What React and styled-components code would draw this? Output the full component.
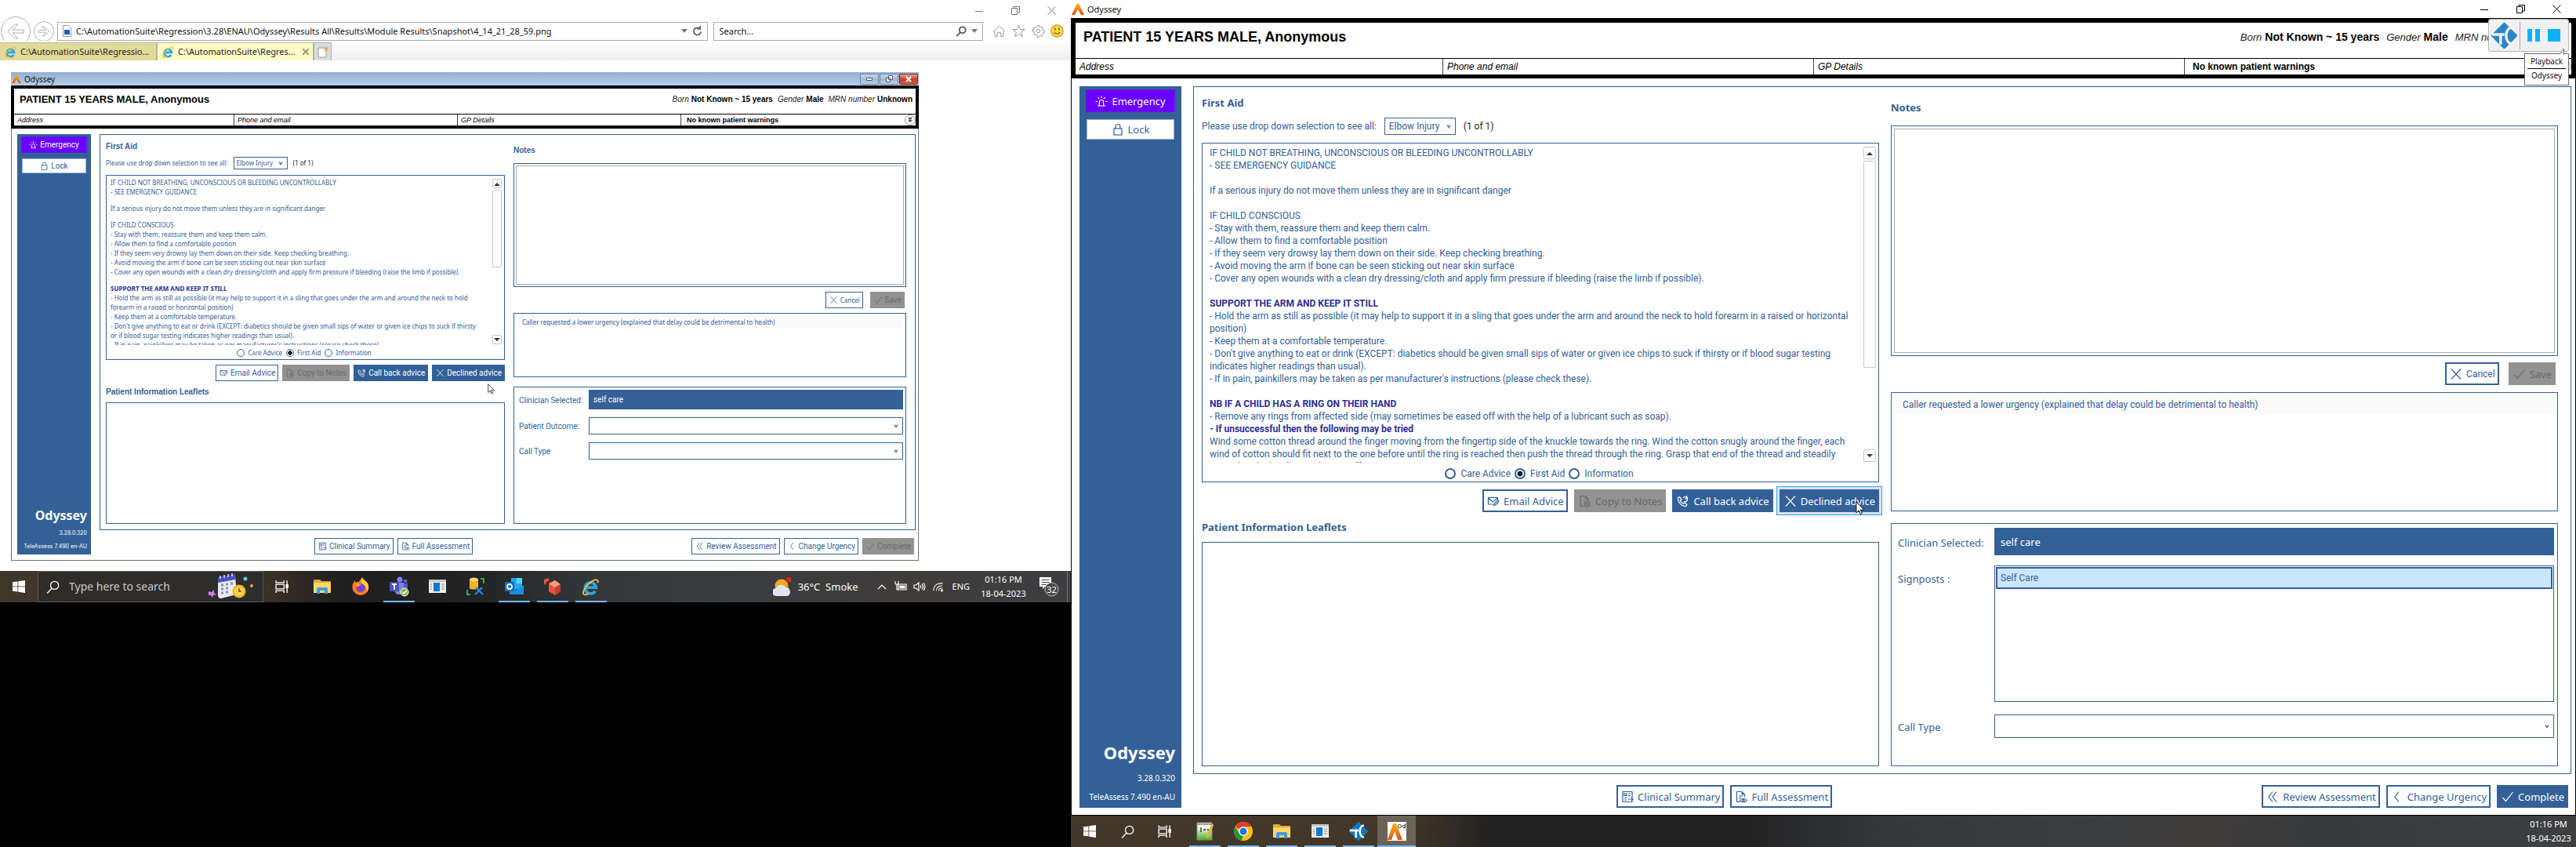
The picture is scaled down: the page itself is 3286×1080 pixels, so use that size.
import React, { useId } from "react";
import styled, { createGlobalStyle, css, ThemeProvider } from "styled-components";

const blue = "#336197";
const sans = `"Noto Sans", "Open Sans", sans-serif`;
const arial = `"Liberation Sans", Arial, sans-serif`;
const roboto = `Roboto, "Noto Sans", sans-serif`;

/* Two densities of the same application window. */
const large = {
  border: "#000", titleBar: 23, titleBg: "#fff", titleFont: 11, logo: 16,
  frame: "6px 6px 5px 6px", nameRow: 45, nameLift: 9, nameFont: 18, namePad: 10, detailRow: 20, detailFont: 12,
  detailCols: "468fr 473fr 473fr 494fr", detailPad: 5, warnPad: 10,
  born: 14, bornLabel: 13, bornGap: 9, bornInner: 4, bornRight: 4,
  bodyPad: "10px 5px 9px 10px", bodyGap: 15,
  side: 130, sidePad: "4px 8px 2px", sideGap: 9, sideFont: 13, emergencyH: 29, lockH: 26, brand: 22, brandLine: 42, version: 10, versionFont: sans, versionLine: 24,
  panelPad: "11px 16px 9px 10px", cols: "864fr 851fr", colGap: 15,
  head: `bold 13px/18px ${sans}`, headH: 18,
  body: `12px/16px ${roboto}`, lineH: 16, paraGap: 16, paraPad: 9, textTop: 1, textRight: 4,
  ctl: `13px/18px ${sans}`, compact: `12px/18px ${roboto}`,
  pickGap: 10, pickH: 22, adviceGap: 10, adviceH: 433, textH: 404,
  scrollW: 16, scrollH: 16, thumb: 264, radio: 14, radioGap: 6, radioSpace: 5, radioTop: 3,
  btnH: 29, btnB: 2, btnPad: 4, btnIcon: 16, btnGap: 5, btnSpace: 8, btnTop: 9,
  leafTop: 10, leafGap: 10, leafH: 286,
  noteTop: 6, noteGap: 14, noteH: 294, notePad: 3, noteBtnTop: 8, noteBtnSpace: 12,
  callTop: 9, callH: 152, callRow: 22, callPad: "5px", callText: 9,
  outTop: 15, outPad: "5px 4px 5px 8px", labelW: 123, fieldH: 35, fieldGap: 13, selectH: 30, listH: 174, itemH: 28, fieldPad: 8,
  footTop: 14, footRight: 4,
};
const small = {
  border: "#6f6f6f", titleBar: 17, titleBg: "linear-gradient(#93b0cf, #b5cfec)", titleFont: 10, logo: 12,
  frame: "4px", nameRow: 32, nameLift: 5, nameFont: 13, namePad: 7, detailRow: 14, detailFont: 9,
  detailCols: "280fr 285fr 285fr 300fr", detailPad: 4, warnPad: 7,
  born: 10, bornLabel: 10, bornGap: 6, bornInner: 3, bornRight: 4,
  bodyPad: "7px 3px 7px 7px", bodyGap: 11,
  side: 94, sidePad: "3px 5px 2px", sideGap: 7, sideFont: 10, emergencyH: 21, lockH: 19, brand: 16, brandLine: 28, version: 7, versionFont: `Inter, ${sans}`, versionLine: 17,
  panelPad: "9px 11px 7px 7px", cols: "509fr 501fr", colGap: 11,
  head: `bold 10px/12px ${arial}`, headH: 12,
  body: `8px/12px ${sans}`, lineH: 12, paraGap: 9, paraPad: 5, textTop: 0, textRight: 12,
  ctl: `10px/12px ${roboto}`, compact: `8px/12px ${sans}`,
  pickGap: 7, pickH: 16, adviceGap: 7, adviceH: 236, textH: 213,
  scrollW: 12, scrollH: 12, thumb: 99, radio: 10, radioGap: 4, radioSpace: 5, radioTop: 2,
  btnH: 21, btnB: 1, btnPad: 4, btnIcon: 11, btnGap: 3, btnSpace: 5, btnTop: 6,
  leafTop: 8, leafGap: 7, leafH: 155,
  noteTop: 5, noteGap: 10, noteH: 158, notePad: 2, noteBtnTop: 6, noteBtnSpace: 9,
  callTop: 6, callH: 82, callRow: 16, callPad: "3px", callText: 7,
  outTop: 12, outPad: "3px 3px 3px 6px", labelW: 89, fieldH: 25, fieldGap: 10, selectH: 22, listH: 22, itemH: 20, fieldPad: 6,
  footTop: 10, footRight: 2,
};
const t = (key) => (p) => p.theme[key];
const px = (key) => (p) => `${p.theme[key]}px`;

const Global = createGlobalStyle`
  *, *::before, *::after { box-sizing: border-box; }
  body { margin: 0; background: #000; font-family: ${sans}; }
  button, input, select, textarea { font: inherit; color: inherit; margin: 0; padding: 0; border-radius: 0; }
  ul { list-style: none; margin: 0; padding: 0; }
  h1, h2, p { margin: 0; font: inherit; }
  svg { display: block; flex: none; }
`;

const Screens = styled.div`
  display: flex;
  align-items: stretch;
  min-height: 100vh;
`;
const Screen = styled.section`
  flex: ${(p) => p.$share} 1 0;
  min-width: 0;
  display: flex;
  flex-direction: column;
  background: ${(p) => (p.$dark ? "#000" : "#fff")};
`;
const Desktop = styled.div`
  display: flex;
  flex-direction: column;
  background: #fff;
`;

/* ---------- window chrome ---------- */
const WindowControls = styled.div`
  display: flex;
  margin-left: auto;
  padding-right: 2px;
`;
const PlainButton = styled.button`
  display: flex;
  align-items: center;
  justify-content: center;
  width: ${(p) => p.$w || 24}px;
  height: ${(p) => p.$h || 24}px;
  border: 0;
  background: transparent;
  color: ${(p) => p.$color || "#000"};
`;
const AeroControls = styled.div`
  display: flex;
  gap: 1px;
  margin-left: auto;
  padding-right: 1px;
`;
const AeroButton = styled.button`
  display: flex;
  align-items: center;
  justify-content: center;
  width: 24px;
  height: 14px;
  border: 1px solid ${(p) => (p.$close ? "#7a2c26" : "#6d87a8")};
  border-radius: 0 0 2px 2px;
  background: ${(p) => (p.$close ? "linear-gradient(#e0a294, #c5432b 50%, #cf5f45)" : "linear-gradient(#c6d8ec, #9fbad9 50%, #b4cce6)")};
`;
const AppWindow = styled.div`
  display: flex;
  flex-direction: column;
  flex: 1;
  background: #fff;
  color: ${blue};
`;
const TitleBar = styled.div`
  display: flex;
  align-items: center;
  gap: 4px;
  height: ${px("titleBar")};
  padding-left: 1px;
  background: ${t("titleBg")};
  font: ${px("titleFont")}/16px ${sans};
  color: #111;
`;
const PatientFrame = styled.header`
  position: relative;
  border: 0 solid #000;
  border-width: ${t("frame")};
  background: #fff;
  color: #000;
  font-family: ${arial};
`;
const NameRow = styled.div`
  display: flex;
  align-items: center;
  justify-content: space-between;
  height: ${px("nameRow")};
  padding: 0 ${px("bornRight")} ${px("nameLift")} ${px("namePad")};
`;
const PatientName = styled.h1`
  font-weight: bold;
  font-size: ${px("nameFont")};
`;
const BirthFacts = styled.div`
  display: flex;
  align-items: baseline;
  gap: ${px("bornGap")};
  font-size: ${px("born")};
  white-space: nowrap;
  i { font-size: ${px("bornLabel")}; margin-right: ${px("bornInner")}; color: #222; }
`;
const DetailRow = styled.div`
  display: grid;
  grid-template-columns: ${t("detailCols")};
  height: calc(${px("detailRow")} + 1px);
  border-top: 1px solid #000;
  font-size: ${px("detailFont")};
`;
const Detail = styled.div`
  display: flex;
  align-items: center;
  justify-content: space-between;
  padding-left: ${(p) => (p.$warn ? p.theme.warnPad : p.theme.detailPad)}px;
  font-style: ${(p) => (p.$warn ? "normal" : "italic")};
  font-weight: ${(p) => (p.$warn ? "bold" : "normal")};
  & + & { border-left: 1px solid #444; }
`;
const ExpandButton = styled.button`
  display: flex;
  align-items: center;
  justify-content: center;
  width: 14px;
  height: 14px;
  border: 1px solid #999;
  border-radius: 50%;
  background: #f3f3f3;
  color: #222;
`;

/* ---------- body ---------- */
const Body = styled.div`
  flex: 1;
  display: flex;
  gap: ${px("bodyGap")};
  padding: ${t("bodyPad")};
  border: 1px solid ${t("border")};
  border-top: 0;
`;
const Sidebar = styled.nav`
  display: flex;
  flex-direction: column;
  align-items: stretch;
  width: ${px("side")};
  padding: ${t("sidePad")};
  background: ${blue};
  color: #fff;
  text-align: right;
  white-space: nowrap;
  font: ${px("version")}/${px("versionLine")} ${t("versionFont")};
`;
const SideButton = styled.button`
  display: flex;
  align-items: center;
  justify-content: center;
  gap: ${px("btnGap")};
  height: ${(p) => (p.$alert ? p.theme.emergencyH : p.theme.lockH)}px;
  margin: 0 ${(p) => (p.$alert ? 0 : 1)}px ${px("sideGap")};
  border: 1px solid ${(p) => (p.$alert ? "#6217e6" : "#9db4d0")};
  background: ${(p) => (p.$alert ? "#6a00ff" : "#fff")};
  color: ${(p) => (p.$alert ? "#fff" : blue)};
  font: ${t("ctl")};
`;
const Brand = styled.div`
  margin-top: auto;
  font: bold ${px("brand")}/${px("brandLine")} ${sans};
`;
const Main = styled.main`
  flex: 1;
  min-width: 0;
  display: flex;
  flex-direction: column;
`;
const Panel = styled.div`
  flex: 1;
  display: grid;
  grid-template-columns: ${t("cols")};
  column-gap: ${px("colGap")};
  padding: ${t("panelPad")};
  border: 1px solid ${blue};
`;
const Column = styled.div`
  display: flex;
  flex-direction: column;
  min-width: 0;
  padding-top: ${(p) => (p.$lower ? p.theme.noteTop : 0)}px;
`;
const Heading = styled.h2`
  font: ${t("head")};
  margin-top: ${(p) => (p.$spaced ? p.theme.leafTop : 0)}px;
`;
const PickRow = styled.div`
  display: flex;
  align-items: center;
  gap: ${px("adviceGap")};
  margin-top: ${px("pickGap")};
  font: ${t("body")};
  span { color: #222; }
`;
const SelectBox = styled.div`
  display: flex;
  align-items: center;
  width: ${(p) => (p.$full ? "100%" : "auto")};
  height: ${(p) => (p.$full ? p.theme.selectH : p.theme.pickH)}px;
  border: 1px solid ${blue};
  padding: 0 5px 0 ${(p) => p.theme.fieldPad - 3}px;
  background: #fff;
  color: ${blue};
  select {
    flex: 1;
    appearance: none;
    border: 0;
    background: transparent;
    padding-right: ${(p) => p.theme.fieldPad}px;
  }
`;
const AdviceBox = styled.div`
  display: flex;
  flex-direction: column;
  height: ${px("adviceH")};
  margin-top: ${px("adviceGap")};
  padding: 3px 3px 0 0;
  border: 1px solid ${blue};
  font: ${t("body")};
`;
const AdviceScroll = styled.div`
  display: flex;
  height: ${px("textH")};
  overflow: hidden;
`;
const AdviceText = styled.div`
  flex: 1;
  display: flex;
  flex-direction: column;
  gap: ${px("paraGap")};
  padding: ${px("textTop")} ${px("textRight")} 0 ${px("paraPad")};
  b { color: #2d2f96; }
`;
const ScrollTrack = styled.div`
  display: flex;
  flex-direction: column;
  gap: 2px;
  width: ${px("scrollW")};
  padding: 1px 0;
  color: #333;
`;
const ScrollArrow = styled.button`
  display: flex;
  align-items: center;
  justify-content: center;
  height: ${px("scrollH")};
  border: 1px solid #c6c6c6;
  border-radius: 2px;
  background: #fff;
  &:last-child { margin-top: auto; }
`;
const ScrollThumb = styled.div`
  height: ${px("thumb")};
  border: 1px solid #c6c6c6;
  border-radius: 2px;
`;
const RadioRow = styled.div`
  flex: 1;
  display: flex;
  align-items: center;
  justify-content: center;
  gap: ${px("radioSpace")};
  padding-top: ${px("radioTop")};
`;
const RadioLabel = styled.label`
  display: flex;
  align-items: center;
  gap: ${px("radioGap")};
  input {
    appearance: none;
    width: ${px("radio")};
    height: ${px("radio")};
    border: ${(p) => p.theme.btnB}px solid ${blue};
    border-radius: 50%;
    background: #fff;
  }
  input:checked { background: radial-gradient(circle, #1b1b1b 45%, #fff 52%); }
`;
const ButtonRow = styled.div`
  display: flex;
  justify-content: flex-end;
  gap: ${(p) => (p.$notes ? p.theme.noteBtnSpace : p.theme.btnSpace)}px;
  margin-top: ${(p) => (p.$notes ? p.theme.noteBtnTop : p.theme.btnTop)}px;
  padding-right: ${(p) => (p.$notes ? p.theme.notePad : 0)}px;
`;
const ActionButton = styled.button`
  display: flex;
  align-items: center;
  gap: ${px("btnGap")};
  height: ${px("btnH")};
  padding: 0 ${(p) => p.theme.btnPad - 1}px 0 ${px("btnPad")};
  border: ${px("btnB")} solid ${blue};
  background: #fff;
  color: ${blue};
  font: ${(p) => (p.$compact ? p.theme.compact : p.theme.ctl)};
  white-space: nowrap;
  ${(p) => p.$solid && css`background: ${blue}; color: #fff;`}
  ${(p) => p.$focused && css`outline: 1px solid #2aa6e6; box-shadow: 0 0 0 3px #dfe0f6; outline-offset: 3px;`}
  &:disabled { background: #929292; border-color: #929292; color: #6a6a6a; }
`;
const PointerHost = styled.div`position: relative;`;
const PointerSpot = styled.div`
  position: absolute;
  left: ${(p) => p.$x}px;
  top: ${(p) => p.$y}px;
`;
const LeafletBox = styled.div`
  flex: 1;
  min-height: ${px("leafH")};
  margin-top: ${px("leafGap")};
  border: 1px solid ${blue};
`;
const NotesLabel = styled.label`font: ${t("head")};`;
const NotesBox = styled.div`
  display: flex;
  height: ${px("noteH")};
  margin-top: ${px("noteGap")};
  padding: ${px("notePad")};
  border: 1px solid ${blue};
  textarea { flex: 1; border: 1px solid #ababab; resize: none; font: ${t("body")}; }
`;
const CallerBox = styled.div`
  height: ${px("callH")};
  margin-top: ${px("callTop")};
  padding: ${t("callPad")};
  border: 1px solid ${blue};
`;
const CallerRow = styled.p`
  height: ${px("callRow")};
  padding: 2px ${px("callText")};
  background: #fafafa;
  font: ${t("body")};
`;
const OutcomeBox = styled.div`
  flex: 1;
  display: grid;
  grid-template-columns: ${px("labelW")} 1fr;
  grid-auto-rows: max-content;
  row-gap: ${px("fieldGap")};
  align-items: center;
  margin-top: ${px("outTop")};
  padding: ${t("outPad")};
  border: 1px solid ${blue};
  font: ${t("ctl")};
`;
const OutcomeLabel = styled.label`
  align-self: ${(p) => (p.$top ? "start" : "center")};
  padding-top: ${(p) => (p.$top ? 8 : 2)}px;
`;
const ClinicianField = styled.input`
  width: 100%;
  height: ${px("fieldH")};
  border: 0;
  padding: 0 ${px("fieldPad")};
  background: ${blue};
  color: #fff;
`;
const SignpostList = styled.ul`
  height: ${px("listH")};
  margin-bottom: 3px;
  padding: 1px;
  border: 1px solid ${blue};
  font: ${t("body")};
  li {
    display: flex;
    align-items: center;
    height: ${px("itemH")};
    padding-left: 4px;
    border: 2px solid ${blue};
    background: #cce5ff;
  }
`;
const Footer = styled.footer`
  display: flex;
  gap: ${px("btnSpace")};
  margin-top: ${px("footTop")};
  padding-right: ${px("footRight")};
`;
const FooterCenter = styled.div`
  flex: 1;
  display: flex;
  justify-content: center;
  gap: ${px("btnSpace")};
`;

/* ---------- playback widget ---------- */
const PlaybackBar = styled.div`
  position: absolute;
  right: 3px;
  top: -5px;
  display: flex;
  align-items: center;
  width: 103px;
  height: 42px;
  border: 1px solid #b4b4b4;
  border-radius: 3px;
  background: #f0f0f0;
  padding: 0 3px;
  z-index: 1;
`;
const PlaybackDivider = styled.span`
  width: 1px;
  height: 35px;
  margin: 0 4px 0 3px;
  background: #a8a8a8;
`;
const PlaybackTip = styled.div`
  position: absolute;
  right: 3px;
  top: 39px;
  width: 57px;
  padding: 1px 3px 3px;
  border: 1px solid #6b6b6b;
  background: #fff;
  color: #111;
  text-align: center;
  font: 10px/17px ${sans};
  z-index: 1;
  div + div { border-top: 1px solid #000; }
`;
const TipTail = styled.svg`
  position: absolute;
  right: 4px;
  top: -8px;
`;

/* ---------- browser ---------- */
const BrowserTitle = styled.div`
  display: flex;
  height: 27px;
`;
const AddressRow = styled.div`
  display: flex;
  align-items: center;
  gap: 7px;
  height: 25px;
  padding: 0 7px 0 1px;
`;
const NavCircle = styled.button`
  display: flex;
  align-items: center;
  justify-content: center;
  flex: none;
  width: ${(p) => p.$d}px;
  height: ${(p) => p.$d}px;
  margin: -8px -3px -8px 0;
  border: 1px solid #b0b0b0;
  border-radius: 50%;
  background: #fff;
`;
const UrlBox = styled.div`
  display: flex;
  align-items: center;
  gap: 6px;
  flex: ${(p) => p.$share} 1 0;
  height: 24px;
  padding: 0 6px;
  border: 1px solid #ababab;
  background: #fff;
  color: #111;
  font: 11px/18px ${sans};
  input { flex: 1; min-width: 0; border: 0; outline: 0; background: transparent; }
`;
const ToolIcons = styled.div`
  display: flex;
  margin-left: 1px;
`;
const TabRow = styled.div`
  display: flex;
  height: 25px;
  padding-top: 2px;
  background: linear-gradient(#fff, #ededed);
`;
const Tab = styled.button`
  display: flex;
  align-items: center;
  gap: 4px;
  width: 200px;
  height: 23px;
  padding: 0 5px;
  border: 1px solid #b5b5a0;
  border-bottom: 0;
  border-left-width: ${(p) => (p.$active ? 1 : 0)}px;
  background: ${(p) => (p.$active ? "#fffac6" : "#e1da98")};
  color: #222;
  font: 11px/18px ${sans};
  white-space: nowrap;
`;
const TabTitle = styled.span`
  flex: 1;
  text-align: left;
`;
const NewTab = styled.button`
  display: flex;
  align-items: center;
  justify-content: center;
  width: 23px;
  height: 23px;
  border: 1px solid #adadad;
  border-bottom: 0;
  background: #dcdcdc;
`;
const Page = styled.div`
  display: flex;
  padding: 15px 194px 13px 14px;
`;

/* ---------- taskbar ---------- */
const TaskbarBar = styled.div`
  display: flex;
  align-items: stretch;
  height: 40px;
  background: ${(p) => p.$bg};
  color: #fff;
  font: 11px/18px ${sans};
`;
const TaskSlot = styled.button`
  display: flex;
  align-items: center;
  justify-content: center;
  width: ${(p) => (p.$pinned ? 48 : 49)}px;
  height: 40px;
  border: 0;
  color: #fff;
  background:
    ${(p) => (p.$running ? `linear-gradient(#76b9ed, #76b9ed) center bottom / ${p.$active ? 49 : 40}px 2px no-repeat,` : "")}
    ${(p) => (p.$active ? "#6b6258" : "transparent")};
`;
const SlotGap = styled.span`width: 2px;`;
const TaskSearch = styled.label`
  display: flex;
  align-items: center;
  gap: 12px;
  width: 288px;
  padding: 0 10px;
  border: 1px solid #5c5955;
  background: linear-gradient(90deg, #302c28, #2d2d2d);
  font: 14px/18px ${sans};
  input {
    flex: 1;
    min-width: 0;
    border: 0;
    background: transparent;
    &::placeholder { color: #c9c9c9; opacity: 1; }
  }
`;
const Tray = styled.div`
  display: flex;
  align-items: center;
  margin-left: auto;
  padding-right: ${(p) => (p.$bare ? 6 : 0)}px;
`;
const Weather = styled.div`
  display: flex;
  align-items: center;
  gap: 8px;
  margin-right: 18px;
  font-size: 13px;
`;
const TrayCell = styled.div`
  display: flex;
  justify-content: center;
  width: 24px;
`;
const Language = styled.span`padding: 0 14px 0 6px;`;
const Clock = styled.time`
  width: 58px;
  text-align: center;
  white-space: nowrap;
`;
const Notices = styled.div`
  margin-left: 16px;
  padding-right: 10px;
  margin-right: 4px;
  border-right: 1px solid #777;
  height: 40px;
  display: flex;
  align-items: center;
`;

/* ---------- drawings ---------- */
const Line = ({ size = 16, w = 1.2, children, box = 16, ...rest }) => (
  <svg width={size} height={size} viewBox={`0 0 ${box} ${box}`} fill="none" stroke="currentColor" strokeWidth={w} {...rest}>{children}</svg>
);
const icons = {
  siren: <path d="M3 14h10M5 14l.7-6.500q0-1 1-1h2.600q1 0 1 1L11 14M8 1.500v2.500M3.500 3l1.500 1.800M12.500 3L11 4.800M.5 8.500h2.500M13 8.500h2.500" />,
  lock: <><rect x="3" y="7" width="10" height="8" /><path d="M5 7V4.500a3 3 0 0 1 6 0V7" /></>,
  mail: <path d="M8 12H1.500V3.500h12V7M1.500 4l6 5 6-5M8.500 13.500l1-2.500 4-4 1.500 1.500-4 4z" />,
  copy: <><path d="M6 14.500H2V1.500h6.500L12 5v3M8.500 1.500V5H12" /><circle cx="10.500" cy="11.500" r="3.500" /><path d="M10.500 9.500v4M8.500 11.500h4" /></>,
  call: <path d="M1.500 4l2-1.500 2.500 3-1.500 1.500c.5 2 2 3.500 4 4.200l1.500-1.200 3 2.500-1.700 2C7 15.500 1 9.500 1.500 4zM9 8.500a3 3 0 1 0-1-4.500M12 1l1.500 3-3 1.500" />,
  x: <path d="M2 1.500l12 13M14 1.500l-12 13" />,
  check: <path d="M1.500 9l4 4.500L14.500 2" />,
  back: <path d="M10 1.500L5 8l5 6.500" />,
  backs: <path d="M8 1.500L3 8l5 6.500M13 1.500L8 8l5 6.500" />,
  summary: <path d="M14 9V1.500H2v13h12V13M4 4h3v2.500H4zM9 4h3M9 6.500h3M4 9.500h3M4 12h3M9 11h6M13 9l2 2-2 2" />,
  report: <><path d="M7 14.500H2.500v-13H9L12.500 5v3M9 1.500V5h3.500M5 7h5M5 9.500h3" /><path d="M6.500 12.500c2-3 7-3 9 0-2 3-7 3-9 0z" /><circle cx="11" cy="12.500" r="1.200" /></>,
};
const Glyph = ({ name, size }) => <Line size={size}>{icons[name]}</Line>;
const Chevron = ({ size = 6 }) => <Line size={size} box={8} w={1.8}><path d="M1.500 2L4 6l2.500-4" /></Line>;
const OdysseyMark = ({ size }) => (
  <svg width={size} height={size} viewBox="0 0 16 16">
    <defs><linearGradient id="flame" x1="0" y1="0" x2="0" y2="1"><stop offset="0" stopColor="#f9b21c" /><stop offset="1" stopColor="#e2501c" /></linearGradient></defs>
    <path d="M6.500 1h3L16 15h-4L8 8l-4 7H0z" fill="url(#flame)" />
  </svg>
);
const Pointer = ({ size }) => (
  <svg width={size * 0.7} height={size} viewBox="0 0 12 18"><path d="M.6.8v14l3.300-3 2.200 5 2-1-2.200-4.700h4.600z" fill="#fff" stroke="#111" strokeWidth="1" /></svg>
);
const ExplorerE = ({ size }) => (
  <svg width={size} height={size} viewBox="0 0 24 24" fill="none">
    <path d="M6 12.500h12.500A6.700 6.700 0 1 0 17.500 17" stroke="#2aa5e4" strokeWidth="3.600" />
    <path d="M20.500 7c1-3-.5-5-4-3.500C10 6 2 15 3 20c.6 2.500 4 1.500 6.500 0" stroke="#f0bd32" strokeWidth="1.800" />
  </svg>
);
const TcMark = ({ size, fill = "#2b86c8", cut = "#fff" }) => (
  <svg width={size} height={size} viewBox="0 0 32 32">
    <path d="M16 0L32 16 16 32 0 16z" fill={fill} stroke={fill} strokeWidth="1" strokeLinejoin="round" />
    <path d="M1 14.500h15M11.500 14v13M25 5.500c-9 3-9 18 0 21" stroke={cut} strokeWidth="3.400" fill="none" />
  </svg>
);
const WindowsMark = () => (
  <svg width="16" height="16" viewBox="0 0 16 16" fill="#fff"><path d="M0 2.300L6.500 1.400v6.100H0zM7.300 1.300L16 0v7.500H7.300zM0 8.300h6.500v6.100L0 13.600zM7.300 8.300H16V16l-8.700-1.300z" /></svg>
);
const SearchMark = ({ size = 17 }) => <Line size={size}><circle cx="10" cy="6" r="4.800" /><path d="M6.600 9.600L1 15.500" /></Line>;
const TaskView = () => <Line size={18}><path d="M1 1v2.500h9V1M1 15v-2.500h9V15M1 5.500h9v5H1zM13.500 1v14" /><path d="M12.500 6h2v3h-2z" fill="#fff" /></Line>;
const FolderMark = () => (
  <svg width="22" height="20" viewBox="0 0 22 20"><path d="M0 2q0-1 1-1h7l2 2h11q1 0 1 1v14H0z" fill="#e9a63a" /><path d="M0 5h22v13H0z" fill="#ffd76a" /><path d="M4 19v-6q0-2 2-2h10q2 0 2 2v6h-4v-4H8v4z" fill="#3d9be0" /></svg>
);
const FirefoxMark = () => (
  <svg width="24" height="24" viewBox="0 0 24 24"><path d="M12 23A10.500 10.500 0 0 1 2 9c.5-2 1.500-3 3-5l.5 3C8 5 9 6 10 6c1-3 3-4 4-6 1 4 5 4 7 8 4 8-2 15-9 15z" fill="#ff7a2a" /><path d="M14 0c1 4 5 4 7 8 2 4 1 8-1 11 0-6-2-9-7-11-1-3 0-6 1-8z" fill="#ffd23c" /><circle cx="12" cy="13.500" r="5.500" fill="#7a3fd0" /><path d="M5 8c3-1 6 0 8 2-3 0-3 3-6 2z" fill="#ff9a2a" /></svg>
);
const TeamsMark = () => (
  <svg width="26" height="26" viewBox="0 0 26 26"><circle cx="14" cy="4" r="3.500" fill="#7b83eb" /><circle cx="21" cy="6" r="2.500" fill="#5059c9" /><path d="M16 9h8v8q-3 5-8 1z" fill="#5059c9" /><path d="M8 8h11v9q-1 6-6 6t-6-6z" fill="#7b83eb" /><path d="M1 7h12v12H1z" fill="#4b53bc" /><path d="M4 10h6M7 10v7" stroke="#fff" strokeWidth="1.800" /><circle cx="20" cy="20" r="5" fill="#84bd3a" stroke="#fff" /><path d="M17.500 20l2 2 3-4" stroke="#fff" strokeWidth="1.400" fill="none" /></svg>
);
const PaneMark = () => (
  <svg width="22" height="18" viewBox="0 0 22 18"><path d="M0 0h22v17H0z" fill="#eee" /><path d="M0 0h22v3H0z" fill="#c8ccd0" /><path d="M6 4h8v11H6z" fill="#0f78d4" /><path d="M2 6h2M2 9h2M2 12h2M16 6h4M16 9h4M16 12h4" stroke="#8a8a8a" /></svg>
);
const DatabaseMark = () => (
  <svg width="24" height="24" viewBox="0 0 24 24"><path d="M4 3v11c0 2 10 2 11 0V3" fill="#f0b429" /><ellipse cx="9.500" cy="3" rx="5.500" ry="2.500" fill="#ffd969" /><path d="M18 2h4v6M5 22H1v-6" stroke="#3aa655" strokeWidth="2" fill="none" /><path d="M11 22l9-9M12 13l9 9" stroke="#2a86d8" strokeWidth="2.400" /></svg>
);
const OutlookMark = () => (
  <svg width="24" height="24" viewBox="0 0 24 24"><path d="M8 1h14v14H8z" fill="#28a8ea" /><path d="M15 1h7v7h-7z" fill="#50d9ff" /><path d="M6 10l9 6 9-6v12H6z" fill="#1490df" /><path d="M0 6h12v12H0z" fill="#0f6cbd" /><circle cx="6" cy="12" r="3" stroke="#fff" strokeWidth="1.800" fill="none" /></svg>
);
const CubeMark = () => (
  <svg width="24" height="24" viewBox="0 0 24 24"><path d="M7 8l8-4 7 5v9l-7 5-8-5z" fill="#e2573f" /><path d="M7 8l8-4 7 5-7 4z" fill="#ff9a80" /><path d="M15 13l7-4v9l-7 5z" fill="#c33f2c" /><path d="M1 3l5-2 2 3-4 2-1 4-2-2z" fill="#e2573f" /></svg>
);
const ChromeMark = () => (
  <svg width="24" height="24" viewBox="0 0 24 24"><circle cx="12" cy="12" r="12" fill="#fbc116" /><path d="M12 0a12 12 0 0 1 10.400 6H12a6 6 0 0 0-5.200 3L1.600 6A12 12 0 0 1 12 0z" fill="#e33b2e" /><path d="M1.600 6l5.200 9A6 6 0 0 0 12 18l-2.500 5.700A12 12 0 0 1 1.600 6z" fill="#229342" /><circle cx="12" cy="12" r="5.800" fill="#fff" /><circle cx="12" cy="12" r="4.500" fill="#1a73e8" /></svg>
);
const NotepadMark = () => (
  <svg width="22" height="24" viewBox="0 0 22 24"><defs><linearGradient id="sheet" x1="0" y1="0" x2="0" y2="1"><stop offset="0.300" stopColor="#f3f5ef" /><stop offset="1" stopColor="#3fae1e" /></linearGradient></defs><path d="M1 1h19v22H1z" fill="url(#sheet)" stroke="#8a8a8a" /><path d="M2 3h17" stroke="#555" strokeDasharray="1 1" strokeWidth="2" /><path d="M6 7v6M9 10h3M14 10h2" stroke="#333" strokeWidth="1.400" /><path d="M21 3L14 20" stroke="#e8b62a" strokeWidth="3" /></svg>
);
const OdysseyTile = () => (
  <svg width="24" height="24" viewBox="0 0 24 24"><defs><linearGradient id="tile" x1="0" y1="0" x2="0" y2="1"><stop offset="0" stopColor="#f9b21c" /><stop offset="1" stopColor="#e2501c" /></linearGradient></defs><path d="M0 0h24v24H0z" fill="#fff" /><path d="M7 2L0 23h5l4-11 4 11h6L11 2z" fill="url(#tile)" /><circle cx="15.500" cy="5.500" r="2" fill="none" stroke="#333" /><path d="M22.500 2v6" stroke="#333" /><circle cx="20.700" cy="6" r="1.600" fill="none" stroke="#333" /></svg>
);
const CalendarArt = () => (
  <svg width="60" height="36" viewBox="0 0 60 36"><path d="M13 8l22-4 2 24-20 5q-4 0-4-4z" fill="#e8e9f2" /><path d="M13 6l22-4v7l-22 4z" fill="#4b4fc4" /><path d="M17 16h3M23 15h3M29 14h3M17 21h3M23 20h3M17 26h3M23 25h3" stroke="#8a8fb5" strokeWidth="3" /><path d="M16 4v4M21 3v4M26 2v4M31 1v4" stroke="#cfd2ff" strokeWidth="1.600" /><circle cx="40" cy="24" r="8.500" fill="#f0b51f" /><circle cx="40" cy="24" r="6" fill="#ffd35a" /><path d="M40 20v4h3" stroke="#70500a" strokeWidth="1.500" fill="none" /><path d="M1 24l4 1 3-3v4l3 2-4 1-1 3-2-3-3 0z" fill="#d37bf0" /><circle cx="48" cy="8" r="2.500" fill="#59d3e6" /><circle cx="56" cy="17" r="2" fill="#f5a623" /></svg>
);
const WeatherMark = () => (
  <svg width="24" height="28" viewBox="0 0 24 28"><circle cx="11" cy="13" r="8.500" fill="#f5a623" /><path d="M4 26a5 5 0 0 1 0-10c1-5 10-6 12-1 7-1 8 10 2 11z" fill="#dfe5f2" /><circle cx="20" cy="5" r="3.500" fill="#d3281f" /></svg>
);
const MinusMark = () => <Line size={10} box={10} w={1}><path d="M0 5.500h10" /></Line>;
const RestoreMark = () => <Line size={11} box={11} w={1}><path d="M.5 2.500h7v8h-7zM3 2V.5h7.500v7.500H8" /></Line>;
const CloseMark = () => <Line size={11} box={11} w={1}><path d="M.5.5l10 10M10.500.5l-10 10" /></Line>;

/* ---------- the clinical application ---------- */
const guidance = [
  ["IF CHILD NOT BREATHING, UNCONSCIOUS OR BLEEDING UNCONTROLLABLY", "- SEE EMERGENCY GUIDANCE"],
  ["If a serious injury do not move them unless they are in significant danger"],
  [
    "IF CHILD CONSCIOUS",
    "- Stay with them, reassure them and keep them calm.",
    "- Allow them to find a comfortable position",
    "- If they seem very drowsy lay them down on their side. Keep checking breathing.",
    "- Avoid moving the arm if bone can be seen sticking out near skin surface",
    "- Cover any open wounds with a clean dry dressing/cloth and apply firm pressure if bleeding (raise the limb if possible).",
  ],
  [
    { strong: "SUPPORT THE ARM AND KEEP IT STILL" },
    "- Hold the arm as still as possible (it may help to support it in a sling that goes under the arm and around the neck to hold forearm in a raised or horizontal position)",
    "- Keep them at a comfortable temperature.",
    "- Don't give anything to eat or drink (EXCEPT: diabetics should be given small sips of water or given ice chips to suck if thirsty or if blood sugar testing indicates higher readings than usual).",
    "- If in pain, painkillers may be taken as per manufacturer's instructions (please check these).",
  ],
  [
    { strong: "NB IF A CHILD HAS A RING ON THEIR HAND" },
    "- Remove any rings from affected side (may sometimes be eased off with the help of a lubricant such as soap).",
    { strong: "- If unsuccessful then the following may be tried" },
    "Wind some cotton thread around the finger moving from the fingertip side of the knuckle towards the ring. Wind the cotton snugly around the finger, each wind of cotton should fit next to the one before until the ring is reached then push the thread through the ring. Grasp that end of the thread and steadily unwind it which will ease the ring off.",
  ],
];

function DropDown({ id, options = [""], full }) {
  return (
    <SelectBox $full={full}>
      <select id={id}>{options.map((o) => <option key={o}>{o}</option>)}</select>
      <Chevron />
    </SelectBox>
  );
}

function Action({ icon, children, theme, ...rest }) {
  return <ActionButton type="button" {...rest}><Glyph name={icon} size={theme.btnIcon} />{children}</ActionButton>;
}

function OdysseyWindow({ theme, controls, overlay, sections, signposts, complete, focused, pointer }) {
  const id = useId();
  return (
    <ThemeProvider theme={theme}>
      <AppWindow>
        <TitleBar><OdysseyMark size={theme.logo} /><span>Odyssey</span>{controls}</TitleBar>
        <PatientFrame>
          <NameRow>
            <PatientName>PATIENT 15 YEARS MALE, Anonymous</PatientName>
            <BirthFacts>
              <span><i>Born</i><b>Not Known ~ 15 years</b></span>
              <span><i>Gender</i><b>Male</b></span>
              <span><i>MRN number</i><b>Unknown</b></span>
            </BirthFacts>
          </NameRow>
          <DetailRow>
            <Detail>Address</Detail>
            <Detail>Phone and email</Detail>
            <Detail>GP Details</Detail>
            <Detail $warn>No known patient warnings
              <ExpandButton type="button" aria-label="Expand"><Line size={8} box={8} w={1.2}><path d="M2 1l2 2 2-2M2 4l2 2 2-2" /></Line></ExpandButton>
            </Detail>
          </DetailRow>
          {overlay}
        </PatientFrame>
        <Body>
          <Sidebar>
            <SideButton type="button" $alert><Glyph name="siren" size={theme.btnIcon} />Emergency</SideButton>
            <SideButton type="button"><Glyph name="lock" size={theme.btnIcon} />Lock</SideButton>
            <Brand>Odyssey</Brand>
            <div>3.28.0.320</div>
            <div>TeleAssess 7.490 en-AU</div>
          </Sidebar>
          <Main>
            <Panel>
              <Column>
                <Heading>First Aid</Heading>
                <PickRow>
                  <label htmlFor={`${id}topic`}>Please use drop down selection to see all:</label>
                  <DropDown id={`${id}topic`} options={["Elbow Injury"]} />
                  <span>(1 of 1)</span>
                </PickRow>
                <AdviceBox>
                  <AdviceScroll>
                    <AdviceText>
                      {guidance.slice(0, sections).map((para, i) => (
                        <div key={i}>{para.map((line, j) => <p key={j}>{line.strong ? <b>{line.strong}</b> : line}</p>)}</div>
                      ))}
                    </AdviceText>
                    <ScrollTrack>
                      <ScrollArrow type="button" aria-label="Scroll up"><svg width="8" height="5" viewBox="0 0 8 5"><path d="M0 5l4-4 4 4z" fill="#333" /></svg></ScrollArrow>
                      <ScrollThumb />
                      <ScrollArrow type="button" aria-label="Scroll down"><svg width="8" height="5" viewBox="0 0 8 5"><path d="M0 0l4 4 4-4z" fill="#333" /></svg></ScrollArrow>
                    </ScrollTrack>
                  </AdviceScroll>
                  <RadioRow role="radiogroup" aria-label="Advice type">
                    {["Care Advice", "First Aid", "Information"].map((name) => (
                      <RadioLabel key={name}><input type="radio" name={`${id}kind`} defaultChecked={name === "First Aid"} />{name}</RadioLabel>
                    ))}
                  </RadioRow>
                </AdviceBox>
                <ButtonRow>
                  <Action theme={theme} icon="mail">Email Advice</Action>
                  <Action theme={theme} icon="copy" disabled>Copy to Notes</Action>
                  <Action theme={theme} icon="call" $solid>Call back advice</Action>
                  <PointerHost>
                    <Action theme={theme} icon="x" $solid $focused={focused}>Declined advice</Action>
                    <PointerSpot $x={pointer.x} $y={pointer.y}><Pointer size={pointer.size} /></PointerSpot>
                  </PointerHost>
                </ButtonRow>
                <Heading $spaced>Patient Information Leaflets</Heading>
                <LeafletBox />
              </Column>
              <Column $lower>
                <NotesLabel htmlFor={`${id}notes`}>Notes</NotesLabel>
                <NotesBox><textarea id={`${id}notes`} /></NotesBox>
                <ButtonRow $notes>
                  <Action theme={theme} icon="x" $compact>Cancel</Action>
                  <Action theme={theme} icon="check" disabled>Save</Action>
                </ButtonRow>
                <CallerBox><CallerRow>Caller requested a lower urgency (explained that delay could be detrimental to health)</CallerRow></CallerBox>
                <OutcomeBox>
                  <OutcomeLabel htmlFor={`${id}clinician`}>Clinician Selected:</OutcomeLabel>
                  <ClinicianField id={`${id}clinician`} readOnly value="self care" />
                  {signposts ? (
                    <>
                      <OutcomeLabel as="span" id={`${id}sign`} $top>Signposts :</OutcomeLabel>
                      <SignpostList role="listbox" aria-labelledby={`${id}sign`}><li role="option" aria-selected="true">Self Care</li></SignpostList>
                    </>
                  ) : (
                    <>
                      <OutcomeLabel htmlFor={`${id}outcome`}>Patient Outcome:</OutcomeLabel>
                      <DropDown id={`${id}outcome`} full />
                    </>
                  )}
                  <OutcomeLabel htmlFor={`${id}type`}>Call Type</OutcomeLabel>
                  <DropDown id={`${id}type`} full />
                </OutcomeBox>
              </Column>
            </Panel>
            <Footer>
              <FooterCenter>
                <Action theme={theme} icon="summary">Clinical Summary</Action>
                <Action theme={theme} icon="report">Full Assessment</Action>
              </FooterCenter>
              <Action theme={theme} icon="backs">Review Assessment</Action>
              <Action theme={theme} icon="back">Change Urgency</Action>
              <Action theme={theme} icon="check" $solid={complete} disabled={!complete}>Complete</Action>
            </Footer>
          </Main>
        </Body>
      </AppWindow>
    </ThemeProvider>
  );
}

function Controls({ color, height }) {
  return (
    <WindowControls>
      <PlainButton $w={46} $h={height} $color={color} aria-label="Minimize"><MinusMark /></PlainButton>
      <PlainButton $w={46} $h={height} $color={color} aria-label="Restore"><RestoreMark /></PlainButton>
      <PlainButton $w={46} $h={height} $color={color} aria-label="Close"><CloseMark /></PlainButton>
    </WindowControls>
  );
}

function Playback() {
  return (
    <>
      <PlaybackBar>
        <TcMark size={33} cut="#f0f0f0" />
        <PlaybackDivider />
        <PlainButton $w={26} aria-label="Pause"><svg width="16" height="16" viewBox="0 0 16 16" fill="#0cb0ff"><path d="M0 0h6v16H0zM10 0h6v16h-6z" /></svg></PlainButton>
        <PlainButton $w={26} aria-label="Stop"><svg width="16" height="16" viewBox="0 0 16 16" fill="#0cb0ff"><path d="M0 0h16v16H0z" /></svg></PlainButton>
      </PlaybackBar>
      <PlaybackTip>
        <TipTail width="8" height="9" viewBox="0 0 8 9"><path d="M1 8.500L6.500 1v7.500" fill="#fff" stroke="#6b6b6b" /></TipTail>
        <div>Playback</div>
        <div>Odyssey</div>
      </PlaybackTip>
    </>
  );
}

const ieTools = [
  ["Home", <path d="M2 11l9-8 9 8-2 1v8h-4v-6h-6v6H4v-8z" />],
  ["Favorites", <path d="M11 1.500l2.500 7H21l-6 4.500 2.200 7.500-6.200-4.500L4.800 20.500 7 13 1 8.500h7.500z" />],
  ["Tools", <><circle cx="11" cy="11" r="3" /><path d="M9.500 2h3l.5 2.500 2 1 2-1.500 2 2-1.500 2 1 2 2.500.5v3l-2.500.5-1 2 1.500 2-2 2-2-1.500-2 1-.5 2.500h-3L9 17.500l-2-1L5 18l-2-2 1.500-2-1-2-2.500-.5v-2l2.500-.5 1-2L3 6l2-2 2 1.500 2-1z" /></>],
];

function Browser() {
  return (
    <>
      <BrowserTitle><Controls color="#777" height={27} /></BrowserTitle>
      <AddressRow>
        <NavCircle $d={38} aria-label="Back"><Line size={24} box={24} w={1} color="#b0b0b0"><path d="M2 12l9-9h4l-7 7h14v4H8l7 7h-4z" /></Line></NavCircle>
        <NavCircle $d={26} aria-label="Forward"><Line size={16} box={24} w={1.4} color="#b0b0b0"><path d="M22 12l-9-9H9l7 7H2v4h14l-7 7h4z" /></Line></NavCircle>
        <UrlBox $share={840}>
          <svg width="11" height="15" viewBox="0 0 11 15"><path d="M.5.5h7L10.500 4v10.500H.5z" fill="#fff" stroke="#999" /><path d="M2 6h7v6H2z" fill="#1b62b8" /></svg>
          <input aria-label="Address" readOnly value={"C:\\AutomationSuite\\Regression\\3.28\\ENAU\\Odyssey\\Results All\\Results\\Module Results\\Snapshot\\4_14_21_28_59.png"} />
          <svg width="8" height="5" viewBox="0 0 8 5"><path d="M0 0h8L4 5z" fill="#777" /></svg>
          <Line size={13} box={14} w={2} color="#666"><path d="M12 8a5 5 0 1 1-2-4.500M7 4h4V0" /></Line>
        </UrlBox>
        <UrlBox $share={339}>
          <input aria-label="Search" defaultValue="Search..." />
          <Line size={14} w={2} color="#555"><circle cx="10" cy="6" r="4.500" /><path d="M6.600 9.600L1.500 15" /></Line>
          <svg width="8" height="5" viewBox="0 0 8 5"><path d="M0 0h8L4 5z" fill="#777" /></svg>
        </UrlBox>
        <ToolIcons>
          {ieTools.map(([name, art]) => (
            <PlainButton key={name} aria-label={name} $w={25}><Line size={17} box={22} w={1.2} color="#8c8c8c">{art}</Line></PlainButton>
          ))}
          <PlainButton aria-label="Feedback" $w={22}>
            <svg width="17" height="17" viewBox="0 0 16 16"><circle cx="8" cy="8" r="7.300" fill="#fbd846" stroke="#b9952a" /><path d="M5.700 4v3M10.300 4v3M4.500 9.500q3.500 4 7 0" stroke="#6e5a12" strokeWidth="1.200" fill="none" /></svg>
          </PlainButton>
        </ToolIcons>
      </AddressRow>
      <TabRow>
        <Tab type="button"><ExplorerE size={17} /><TabTitle>C:\AutomationSuite\Regressio...</TabTitle></Tab>
        <Tab type="button" $active><ExplorerE size={17} /><TabTitle>C:\AutomationSuite\Regres...</TabTitle><Line size={8} box={8} w={1.6} color="#8d8a70"><path d="M0 0l8 8M8 0L0 8" /></Line></Tab>
        <NewTab type="button" aria-label="New tab"><svg width="14" height="15" viewBox="0 0 14 15"><path d="M1 2h10v12H1z" fill="#fff" stroke="#999" /><path d="M11 0v7M7.500 3.500h7M8.500 1l5 5M13.500 1l-5 5" stroke="#eda63a" /></svg></NewTab>
      </TabRow>
    </>
  );
}

const leftBar = "linear-gradient(90deg, #40362a 0, #3b3126 25%, #1f1f20 32%, #232425 45%, #35383b 56%, #3a3d40 70%, #403c3a 85%, #3c3e41)";
const rightBar = "linear-gradient(90deg, #43372a 0, #43372a 22%, #222222 28%, #232324 45%, #35383b 54%, #3a3d40 68%, #3f3b39 75%, #36393b 83%, #3e3f41)";

function TaskApps({ apps }) {
  return apps.map(([name, art, state]) => (
    <TaskSlot key={name} type="button" aria-label={name} $running={state !== "idle"} $active={state === "active"}>{art}</TaskSlot>
  ));
}

export default function App() {
  return (
    <>
      <Global />
      <Screens>
        <Screen $share={1366} $dark>
          <Desktop>
            <Browser />
            <Page>
              <OdysseyWindow
                theme={small}
                sections={4}
                pointer={{ x: 71, y: 24, size: 14 }}
                controls={
                  <AeroControls>
                    <AeroButton type="button" aria-label="Minimize"><svg width="8" height="4"><path d="M.5.5h7v3h-7z" fill="#fff" stroke="#556" /></svg></AeroButton>
                    <AeroButton type="button" aria-label="Restore"><svg width="9" height="9"><path d="M3.500.5h5v5h-5zM.5 3.500h5v5h-5z" fill="#fff" stroke="#556" /></svg></AeroButton>
                    <AeroButton type="button" $close aria-label="Close"><svg width="8" height="8"><path d="M1 1l6 6M7 1L1 7" stroke="#fff" strokeWidth="2" /></svg></AeroButton>
                  </AeroControls>
                }
              />
            </Page>
            <TaskbarBar $bg={leftBar}>
              <TaskSlot type="button" $pinned aria-label="Start"><WindowsMark /></TaskSlot>
              <TaskSearch><SearchMark /><input placeholder="Type here to search" /><CalendarArt /></TaskSearch>
              <TaskSlot type="button" $pinned aria-label="Task view"><TaskView /></TaskSlot>
              <SlotGap />
              <TaskApps
                apps={[
                  ["Explorer", <FolderMark />, "idle"],
                  ["Firefox", <FirefoxMark />, "idle"],
                  ["Teams", <TeamsMark />, "open"],
                  ["Viewer", <PaneMark />, "idle"],
                  ["Database", <DatabaseMark />, "idle"],
                  ["Outlook", <OutlookMark />, "open"],
                  ["Packages", <CubeMark />, "open"],
                  ["Internet Explorer", <ExplorerE size={25} />, "open"],
                ]}
              />
              <Tray>
                <Weather><WeatherMark /><span>36°C&nbsp; Smoke</span></Weather>
                <TrayCell><Line size={12} box={12} w={1.2}><path d="M1 9l5-5 5 5" /></Line></TrayCell>
                <TrayCell><Line size={16} w={1.2}><path d="M5 5h10v7H5zM1 1v3q0 1 2 1t2-1V1M3 5v7h2" /><path d="M7 7h6v3H7z" fill="#fff" /></Line></TrayCell>
                <TrayCell><Line size={16} w={1.2}><path d="M1 6v4h2.500L7 13V3L3.500 6zM9 6q1.500 2 0 4M11 4.500q3 3.500 0 7M13 3q4 5 0 10" /></Line></TrayCell>
                <TrayCell><Line size={14} w={1.2}><path d="M1 14Q1 3 14 3M5 14q0-7 9-7.500M8.500 14q0-4 5.500-4" /><circle cx="13" cy="13.500" r="1.200" fill="#fff" /></Line></TrayCell>
                <Language>ENG</Language>
                <Clock>01:16 PM<br />18-04-2023</Clock>
                <Notices>
                  <svg width="26" height="26" viewBox="0 0 26 26"><path d="M1 1h15v12H8l-3 3v-3H1z" fill="#fff" /><path d="M3.500 4.500h10M3.500 7.500h10M3.500 10.500h6" stroke="#444" /><circle cx="16.500" cy="16.500" r="8.500" fill="#4a4a4a" stroke="#bdbdbd" /><text x="16.500" y="20.500" textAnchor="middle" fontSize="11" fontFamily="Noto Sans, sans-serif" fill="#fff">32</text></svg>
                </Notices>
              </Tray>
            </TaskbarBar>
          </Desktop>
        </Screen>
        <Screen $share={1920}>
          <OdysseyWindow
            theme={large}
            sections={5}
            signposts
            complete
            focused
            pointer={{ x: 97, y: 15, size: 18 }}
            controls={<Controls color="#000" height={22} />}
            overlay={<Playback />}
          />
          <TaskbarBar $bg={rightBar}>
            <TaskSlot type="button" $pinned aria-label="Start"><WindowsMark /></TaskSlot>
            <TaskSlot type="button" $pinned aria-label="Search"><SearchMark /></TaskSlot>
            <TaskSlot type="button" $pinned aria-label="Task view"><TaskView /></TaskSlot>
            <SlotGap />
            <TaskApps
              apps={[
                ["Notepad", <NotepadMark />, "open"],
                ["Chrome", <ChromeMark />, "open"],
                ["Explorer", <FolderMark />, "open"],
                ["Viewer", <PaneMark />, "open"],
                ["TestComplete", <TcMark size={24} fill="#0a78c2" />, "open"],
                ["Odyssey", <OdysseyTile />, "active"],
              ]}
            />
            <Tray $bare><Clock>01:16 PM<br />18-04-2023</Clock></Tray>
          </TaskbarBar>
        </Screen>
      </Screens>
    </>
  );
}
